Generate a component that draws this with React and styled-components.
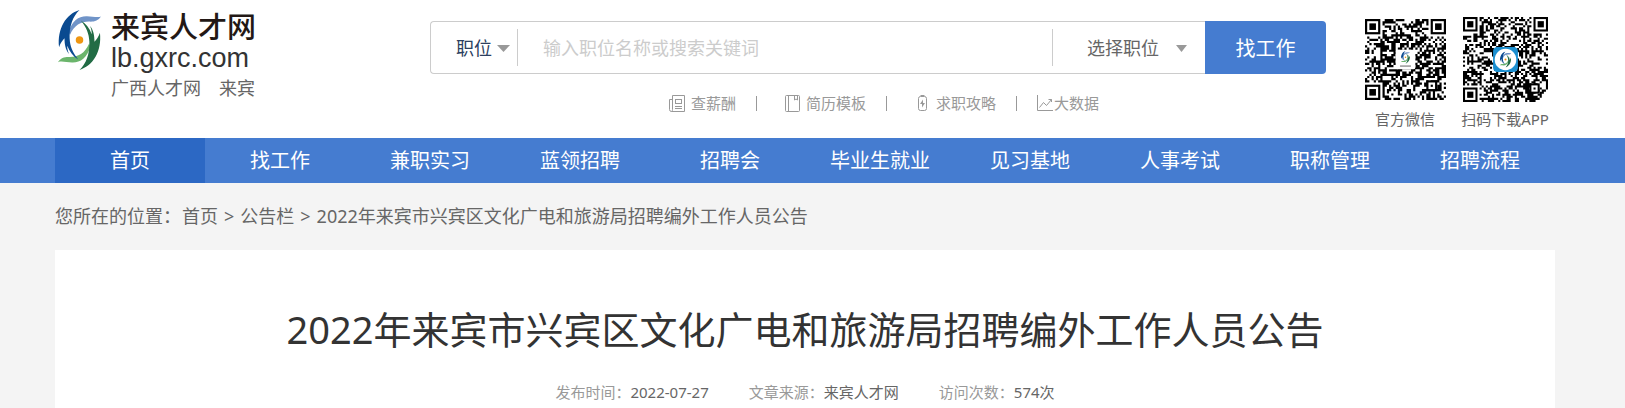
import React from 'react';
import styled, { createGlobalStyle } from 'styled-components';

const GlobalStyle = createGlobalStyle`
    * {
        box-sizing: border-box;
    }

    body {
        margin: 0;
        background: #f4f4f4;
        color: #666;
        font-family: "Noto Sans", "Noto Sans CJK SC", sans-serif;
        font-size: 18px;
    }

    a {
        color: inherit;
        text-decoration: none;
    }

    input, select, button {
        font-family: inherit;
    }
`;

const Container = styled.div`
    padding: 0 70px 0 55px;
`;

const Header = styled.header`
    background: #fff;
`;

const HeaderRow = styled(Container)`
    display: flex;
    align-items: flex-start;
    height: 138px;
`;

const Brand = styled.div`
    flex: 0 0 375px;
    display: flex;
    gap: 9px;
    padding: 9px 0 0 2px;
`;

const BrandText = styled.div`
    display: flex;
    flex-direction: column;
    white-space: nowrap;
`;

const BrandName = styled.a`
    color: #231815;
    font-size: 29px;
    font-weight: 500;
    line-height: 36px;
`;

const BrandDomain = styled.span`
    color: #333;
    font-family: "Liberation Sans", sans-serif;
    font-size: 27px;
    line-height: 26px;
`;

const BrandSites = styled.div`
    display: flex;
    gap: 18px;
    margin-top: 3px;
    line-height: 28px;
`;

const Search = styled.div`
    flex: 1;
    min-width: 0;
    margin-right: 34px;
    padding-top: 21px;
`;

const SearchForm = styled.form`
    display: flex;
    height: 53px;
`;

const SearchFields = styled.div`
    flex: 1;
    display: flex;
    align-items: center;
    min-width: 0;
    border: 1px solid #ccc;
    border-right: 0;
    border-radius: 4px 0 0 4px;
`;

const SelectBox = styled.label`
    flex: 0 0 ${props => props.$width};
    position: relative;
    display: flex;
    align-items: center;
    height: 37px;
    color: ${props => props.$color};

    svg {
        position: absolute;
        right: ${props => props.$arrowRight};
        top: 16px;
        pointer-events: none;
    }
`;

const Select = styled.select`
    width: 100%;
    height: 100%;
    padding: 0 0 0 ${props => props.$indent};
    border: 0;
    background: transparent;
    color: inherit;
    font-size: 18px;
    appearance: none;
`;

const Keyword = styled.input`
    flex: 1;
    min-width: 0;
    height: 37px;
    padding: 0 25px;
    border: solid #ccc;
    border-width: 0 1px;
    background: transparent;
    color: #333;
    font-size: 18px;

    &::placeholder {
        color: #ccc;
        opacity: 1;
    }
`;

const SearchButton = styled.button`
    flex: 0 0 121px;
    border: 0;
    border-radius: 0 4px 4px 0;
    background: #457cd0;
    color: #fff;
    font-size: 20px;
`;

const QuickLinks = styled.div`
    display: flex;
    align-items: center;
    justify-content: center;
    gap: 20px;
    margin-top: 18px;
    padding-left: 12px;
    color: #999;
    font-size: 15px;
    line-height: 22px;
`;

const QuickLink = styled.a`
    display: flex;
    align-items: center;
    gap: ${props => props.$gap || '6px'};
    white-space: nowrap;
`;

const Bar = styled.span`
    width: 1px;
    height: 15px;
    margin-right: ${props => props.$space || '0'};
    background: #999;
`;

const Codes = styled.div`
    flex: 0 0 195px;
    display: flex;
    justify-content: space-between;
    padding-top: 17px;
`;

const Code = styled.figure`
    display: flex;
    flex-direction: column;
    align-items: center;
    width: ${props => props.$width};
    margin: 0;
`;

const CodeImage = styled.div`
    display: flex;
    align-items: center;
    height: 85px;
`;

const CodeCaption = styled.figcaption`
    margin-top: 6px;
    font-size: 15px;
    line-height: 22px;
    white-space: nowrap;
`;

const Nav = styled.nav`
    background: #457cd0;
`;

const NavRow = styled(Container)`
    display: flex;
`;

const NavLink = styled.a`
    flex: 1;
    background: ${props => (props.$active ? '#2c68c4' : 'transparent')};
    color: #fff;
    font-size: 20px;
    line-height: 45px;
    text-align: center;
    white-space: nowrap;
`;

const Breadcrumb = styled.div`
    display: flex;
    gap: 6px;
    line-height: 67px;
    white-space: nowrap;
`;

const BreadcrumbLabel = styled.span`
    margin-right: -5px;
`;

const Article = styled.article`
    padding: 50px 24px 5px;
    background: #fff;
`;

const Title = styled.h1`
    margin: 0;
    color: #333;
    font-size: 38px;
    font-weight: 400;
    line-height: 58px;
    text-align: center;
`;

const Meta = styled.div`
    display: flex;
    justify-content: center;
    gap: 40px;
    margin-top: 23px;
    color: #999;
    font-size: 15px;
    line-height: 22px;
`;

const MetaValue = styled.span`
    color: #666;
`;

// One half is drawn and turned round the dot to give the other
const arc = 'M84 98C94 64 114 50 138 51C154 51 168 56 179 52C171 65 158 68 144 67C120 67 100 78 88 106Z';
const figure = 'M116 33C76 45 50 88 56 142C60 130 66 122 72 116C72 134 75 150 85 162C81 152 80 146 80 138C87 156 98 170 112 178C96 158 88 140 87 116C86 80 96 52 116 33Z';

const Swirl = ({ width, height }) => (
    <svg width={width} height={height} viewBox="50 30 132 182">
        <path fill="#7094c8" d={arc} />
        <path fill="#6bb56c" d={arc} transform="rotate(180 116 119)" />
        <path fill="#0a4a90" d={figure} />
        <path fill="#226c45" d={figure} transform="rotate(180 116 121)" />
        <circle cx="116" cy="121" r="11" fill="#ef9611" />
    </svg>
);

const Arrow = ({ width = 13 }) => (
    <svg width={width} height="7" viewBox="0 0 12 7" preserveAspectRatio="none">
        <path fill="#999" d="M0 0H12L6 7Z" />
    </svg>
);

const LineIcon = ({ width, height = 17, children }) => (
    <svg width={width} height={height} viewBox={`0 0 ${width} ${height}`} fill="none" stroke="#999">
        {children}
    </svg>
);

const isFinder = (x, y, n) => (x < 8 && y < 8) || (x > n - 9 && y < 8) || (x < 8 && y > n - 9);

const buildModules = (n, seed) => {
    let state = seed;
    let d = '';
    for (let y = 0; y < n; y++) {
        for (let x = 0; x < n; x++) {
            state = (state * 48271) % 2147483647;
            if (! isFinder(x, y, n) && state / 2147483647 > 0.47) {
                d += `M${x} ${y}h1v1h-1z`;
            }
        }
    }
    return d;
};

const Finder = ({ x, y }) => (
    <g transform={`translate(${x} ${y})`}>
        <rect x="0.5" y="0.5" width="6" height="6" fill="#fff" stroke="#000" />
        <rect x="2" y="2" width="3" height="3" fill="#000" />
    </g>
);

const QrCode = ({ size, modules, seed, children }) => (
    <svg width={size} height={size} viewBox={`0 0 ${modules} ${modules}`}>
        <path d={buildModules(modules, seed)} fill="#000" />
        <Finder x={0} y={0} />
        <Finder x={modules - 7} y={0} />
        <Finder x={0} y={modules - 7} />
        <rect x={modules - 9} y={modules - 9} width="5" height="5" fill="#000" />
        <rect x={modules - 8} y={modules - 8} width="3" height="3" fill="#fff" />
        <rect x={modules - 7} y={modules - 7} width="1" height="1" fill="#000" />
        {children}
    </svg>
);

const navItems = [
    '首页', '找工作', '兼职实习', '蓝领招聘', '招聘会',
    '毕业生就业', '见习基地', '人事考试', '职称管理', '招聘流程'
];

const title = '2022年来宾市兴宾区文化广电和旅游局招聘编外工作人员公告';

const meta = [
    { label: '发布时间：', value: '2022-07-27' },
    { label: '文章来源：', value: '来宾人才网' },
    { label: '访问次数：', value: '574次' }
];

export default () => (
    <>
        <GlobalStyle />
        <Header>
            <HeaderRow>
                <Brand>
                    <Swirl width={45} height={62} />
                    <BrandText>
                        <BrandName href="#">来宾人才网</BrandName>
                        <BrandDomain>lb.gxrc.com</BrandDomain>
                        <BrandSites>
                            <a href="#">广西人才网</a>
                            <a href="#">来宾</a>
                        </BrandSites>
                    </BrandText>
                </Brand>

                <Search>
                    <SearchForm onSubmit={e => e.preventDefault()}>
                        <SearchFields>
                            <SelectBox $width="86px" $color="#2c4060" $arrowRight="7px">
                                <Select aria-label="搜索类型" $indent="25px">
                                    <option>职位</option>
                                </Select>
                                <Arrow />
                            </SelectBox>
                            <Keyword type="text" aria-label="关键词" placeholder="输入职位名称或搜索关键词" />
                            <SelectBox $width="152px" $color="#666" $arrowRight="18px">
                                <Select aria-label="选择职位" $indent="34px">
                                    <option>选择职位</option>
                                </Select>
                                <Arrow width={11} />
                            </SelectBox>
                        </SearchFields>
                        <SearchButton type="submit">找工作</SearchButton>
                    </SearchForm>

                    <QuickLinks>
                        <QuickLink href="#">
                            <LineIcon width={16}>
                                <path d="M3.5 0.5H15.5V16.5H2.5Q0.5 16.5 0.5 14.5V4.5H3.5M3.5 0.5V14.5Q3.5 16 2.5 16.5M6 4.5H13M6 8.5H13M6.5 4.5V8.5M12.5 4.5V8.5M6 11.5H13M6 13.5H13" />
                            </LineIcon>
                            查薪酬
                        </QuickLink>
                        <Bar $space="8px" />
                        <QuickLink href="#">
                            <LineIcon width={15}>
                                <rect x="0.5" y="0.5" width="14" height="16" rx="1" />
                                <path d="M3.5 0.5V16.5M9.5 1V5L11 4L12.5 5V1" />
                            </LineIcon>
                            简历模板
                        </QuickLink>
                        <Bar $space="10px" />
                        <QuickLink href="#" $gap="8px">
                            <LineIcon width={11}>
                                <rect x="1.5" y="1.5" width="8" height="14" rx="2" />
                                <path d="M3.5 0.5H7.5" />
                                <path d="M6 4.5L3 9H5V12.5L8 8H6Z" fill="#999" stroke="none" />
                            </LineIcon>
                            求职攻略
                        </QuickLink>
                        <Bar />
                        <QuickLink href="#" $gap="0">
                            <LineIcon width={17}>
                                <path d="M0.5 0V15.5H16M2.5 12.5L6.5 7.5L9.5 10.5L14.5 4.5M11.5 4.5H14.5V7" />
                            </LineIcon>
                            大数据
                        </QuickLink>
                    </QuickLinks>
                </Search>

                <Codes>
                    <Code $width="90px">
                        <CodeImage>
                            <QrCode size={81} modules={37} seed={4127}>
                                <rect x="14" y="14" width="9" height="9" rx="1" fill="#fff" />
                                <svg x="16" y="14.5" width="5" height="6"><Swirl width="5" height="6" /></svg>
                                <path d="M16 21.5H21" stroke="#888" strokeWidth="0.6" />
                            </QrCode>
                        </CodeImage>
                        <CodeCaption>官方微信</CodeCaption>
                    </Code>
                    <Code $width="100px">
                        <CodeImage>
                            <QrCode size={85} modules={41} seed={90871}>
                                <rect x="14.5" y="14.5" width="12" height="12" rx="2" fill="#1b8fd0" />
                                <circle cx="20.5" cy="20.5" r="5.2" fill="#fff" />
                                <svg x="17.5" y="16.5" width="6" height="8"><Swirl width="6" height="8" /></svg>
                            </QrCode>
                        </CodeImage>
                        <CodeCaption>扫码下载APP</CodeCaption>
                    </Code>
                </Codes>
            </HeaderRow>
        </Header>

        <Nav>
            <NavRow>
                {navItems.map((item, index) => (
                    <NavLink key={item} href="#" $active={index === 0}>{item}</NavLink>
                ))}
            </NavRow>
        </Nav>

        <Container>
            <Breadcrumb>
                <BreadcrumbLabel>您所在的位置：</BreadcrumbLabel>
                <a href="#">首页</a>
                <span>&gt;</span>
                <a href="#">公告栏</a>
                <span>&gt;</span>
                <span>{title}</span>
            </Breadcrumb>
            <Article>
                <Title>{title}</Title>
                <Meta>
                    {meta.map(({ label, value }) => (
                        <span key={label}>
                            {label}<MetaValue>{value}</MetaValue>
                        </span>
                    ))}
                </Meta>
            </Article>
        </Container>
    </>
);
